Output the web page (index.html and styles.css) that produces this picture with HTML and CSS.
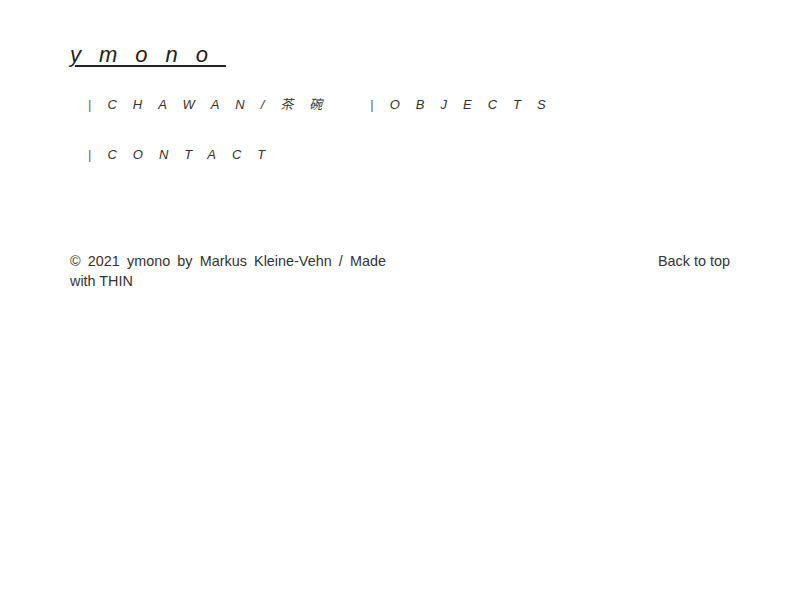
FILE: index.html
```html
<!DOCTYPE html>
<html>
<head>
<meta charset="utf-8">
<link rel="stylesheet" href="styles.css">
</head>
<body>
<div class="page">
  <header class="header">
    <a class="logo" href="#">ymono</a>
    <nav class="nav">
      <a class="nav-item" href="#"><span class="pipe">|</span>CHAWAN/茶碗</a>
      <a class="nav-item" href="#"><span class="pipe">|</span>OBJECTS</a>
      <a class="nav-item" href="#"><span class="pipe">|</span>CONTACT</a>
    </nav>
  </header>
  <footer class="footer">
    <p class="copy">© 2021 ymono by Markus Kleine-Vehn / Made with THIN</p>
    <a class="top" href="#">Back to top</a>
  </footer>
</div>
</body>
</html>
```
FILE: styles.css
```css
html, body {
  margin: 0;
  padding: 0;
  background: #fff;
}
.page {
  width: 660px;
  padding: 40px 70px 0 70px;
  font-family: "Liberation Sans", Arial, "Noto Sans CJK JP", sans-serif;
  color: #222;
}
.header {
  display: flex;
  flex-direction: column;
}
.logo {
  align-self: flex-start;
  font-size: 22px;
  font-style: italic;
  letter-spacing: 18px;
  line-height: 30px;
  color: #222;
  text-decoration: underline;
  text-decoration-thickness: 2px;
  text-underline-offset: 3px;
}
.nav {
  display: flex;
  flex-wrap: wrap;
  column-gap: 32px;
  row-gap: 34px;
  padding-left: 18px;
  margin-top: 27px;
}
.nav-item {
  font-size: 13px;
  font-style: italic;
  line-height: 16px;
  letter-spacing: 16px;
  color: #333;
  text-decoration: none;
  white-space: nowrap;
}
.pipe {
  font-style: normal;
  color: #666;
  letter-spacing: 0;
  margin-right: 16px;
}
.footer {
  display: flex;
  justify-content: space-between;
  align-items: flex-start;
  margin-top: 88px;
}
.copy {
  margin: 0;
  width: 316px;
  font-size: 14.4px;
  line-height: 20px;
  text-align: justify;
  color: #333;
}
.top {
  font-size: 14.4px;
  line-height: 20px;
  color: #333;
  text-decoration: none;
}
```
